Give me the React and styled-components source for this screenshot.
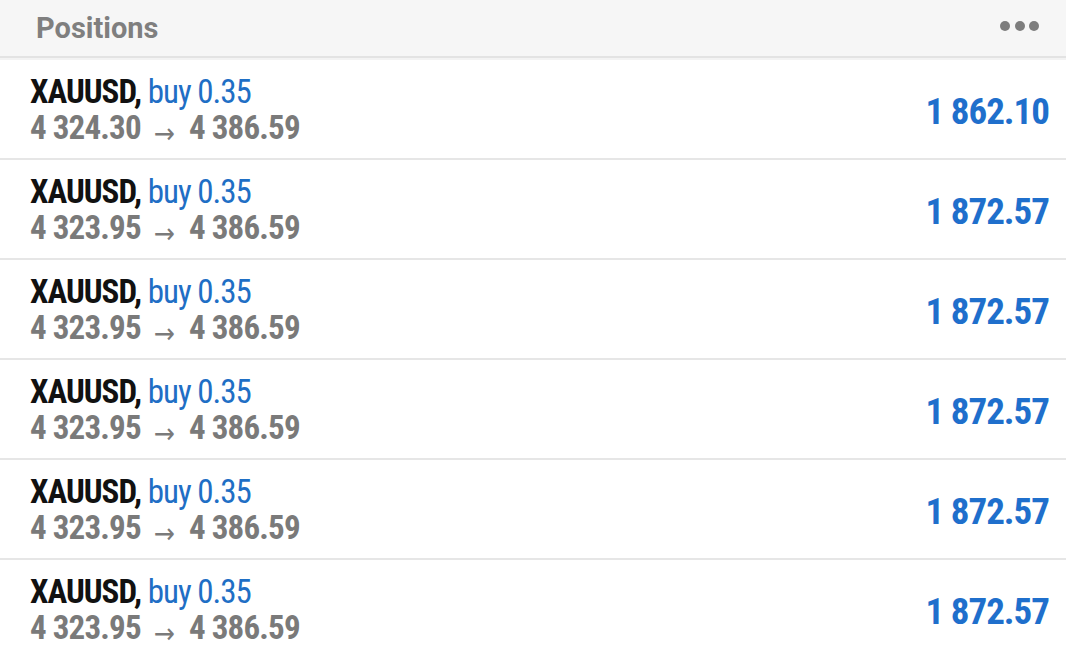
import React from "react";
import styled, { createGlobalStyle } from "styled-components";

const Global = createGlobalStyle`
  html, body { margin: 0; padding: 0; background: #ffffff; }
  body { font-family: "Roboto Condensed", "Liberation Sans Narrow", "DejaVu Sans Condensed", Roboto, sans-serif; font-stretch: condensed; }
`;

const Page = styled.div`
  width: 1066px;
  height: 649px;
  overflow: hidden;
  background: #fff;
`;

const Header = styled.div`
  height: 56px;
  background: #f6f6f6;
  border-bottom: 2px solid #e3e3e3;
  display: flex;
  align-items: center;
  justify-content: space-between;
  padding: 0 27px 0 36px;
  box-sizing: content-box;
`;

const Title = styled.div`
  font-family: Roboto, "Open Sans", sans-serif;
  font-stretch: normal;
  font-weight: 700;
  font-size: 29px;
  color: #7f7f7f;
`;

const Dots = styled.div`
  display: flex;
  gap: 4.5px;
  margin-top: -4px;
`;

const Dot = styled.span`
  width: 10px;
  height: 10px;
  border-radius: 50%;
  background: #7d7d7d;
`;

const Gap = styled.div`
  height: 2px;
  background: #f3f3f3;
`;

const Row = styled.div`
  height: 98px;
  display: flex;
  align-items: center;
  justify-content: space-between;
  padding: 0 17px 0 30px;
  border-bottom: 2px solid #e6e6e6;
`;

const Left = styled.div`
  display: flex;
  flex-direction: column;
  line-height: 36px;
  font-size: 33px;
  font-weight: 700;
  letter-spacing: -1px;
  margin-top: 4px;
`;

const Line = styled.div`
  white-space: nowrap;
`;

const Symbol = styled.span`
  color: #111;
  font-weight: 700;
`;

const Side = styled.span`
  color: #1f6fc5;
  font-weight: 400;
`;

const Prices = styled.div`
  color: #7a7a7a;
  font-weight: 700;
  letter-spacing: -0.8px;
  white-space: nowrap;
`;

const Arrow = styled.span`
  display: inline-block;
  font-family: "DejaVu Sans", sans-serif;
  font-weight: 400;
  font-size: 28px;
  letter-spacing: 0;
  margin: 0 14px 0 13px;
  vertical-align: -4px;
  line-height: 1;
`;

const Profit = styled.div`
  font-size: 37px;
  font-weight: 700;
  letter-spacing: -1px;
  color: #1f6fcc;
  margin-top: 4px;
`;

const rows = [
  { open: "4 324.30", profit: "1 862.10" },
  { open: "4 323.95", profit: "1 872.57" },
  { open: "4 323.95", profit: "1 872.57" },
  { open: "4 323.95", profit: "1 872.57" },
  { open: "4 323.95", profit: "1 872.57" },
  { open: "4 323.95", profit: "1 872.57" },
];

export default function App() {
  return (
    <>
      <Global />
      <Page>
        <Header>
          <Title>Positions</Title>
          <Dots>
            <Dot />
            <Dot />
            <Dot />
          </Dots>
        </Header>
        <Gap />
        {rows.map((r, i) => (
          <Row key={i}>
            <Left>
              <Line>
                <Symbol>XAUUSD,</Symbol> <Side>buy 0.35</Side>
              </Line>
              <Prices>
                {r.open}
                <Arrow>→</Arrow>
                4 386.59
              </Prices>
            </Left>
            <Profit>{r.profit}</Profit>
          </Row>
        ))}
      </Page>
    </>
  );
}
